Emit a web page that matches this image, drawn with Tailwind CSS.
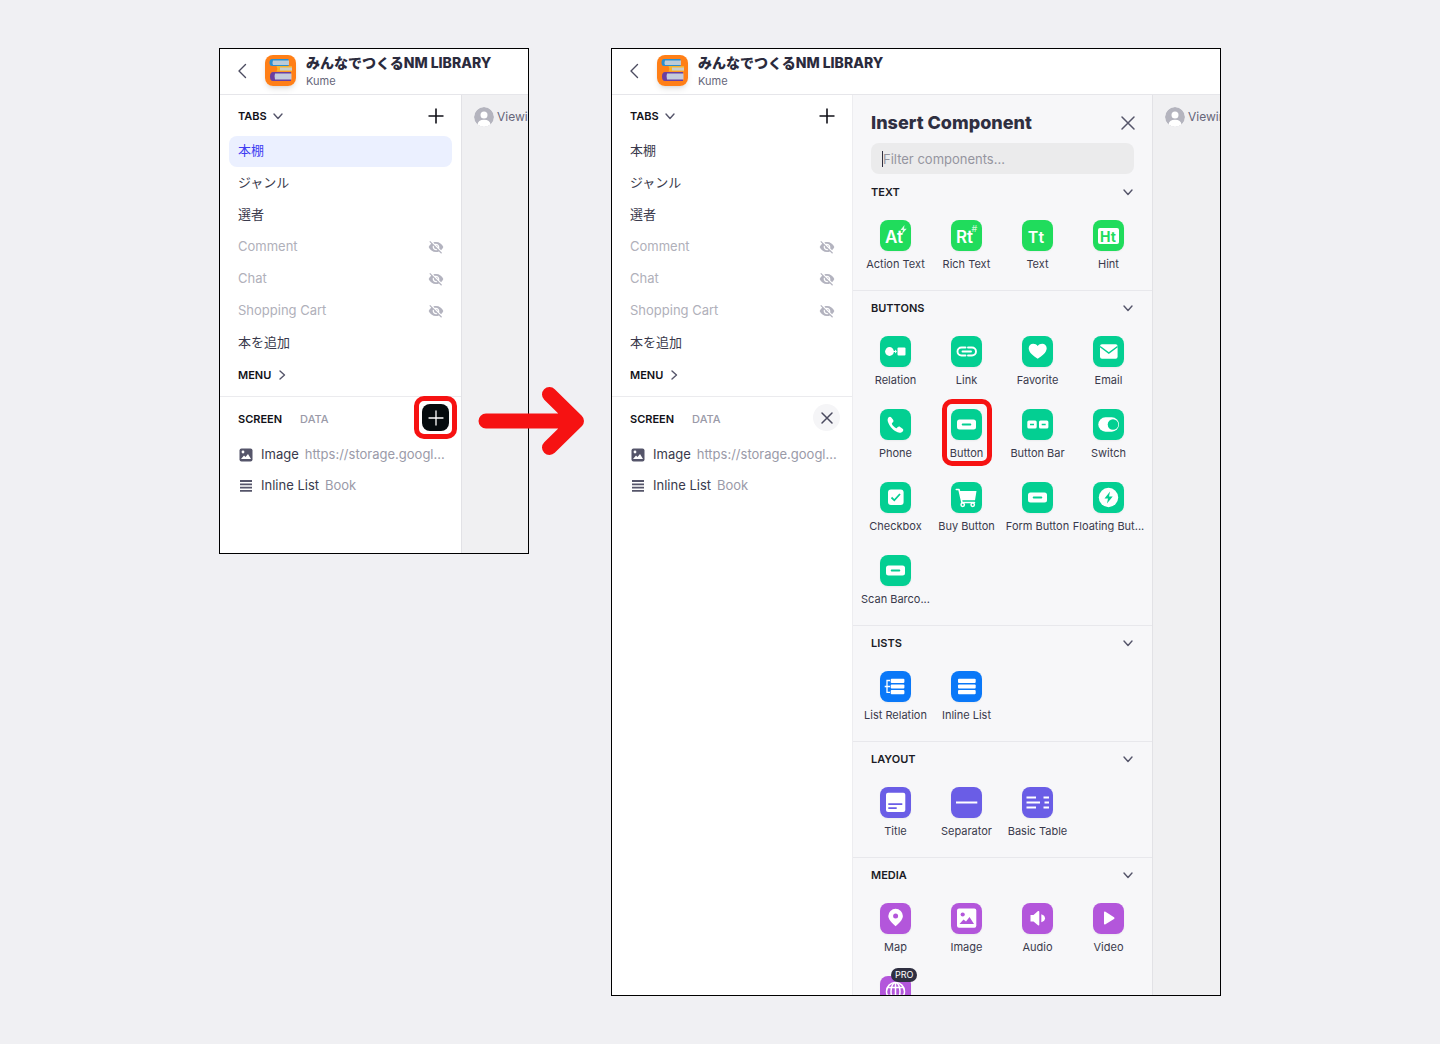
<!DOCTYPE html>
<html lang="ja">
<head>
    <meta charset="UTF-8">
    <meta name="viewport" content="width=device-width, initial-scale=1.0">
    <title>みんなでつくるNM LIBRARY</title>
    <script src="https://cdn.jsdelivr.net/npm/@tailwindcss/browser@4"></script>
</head>
<body class="bg-[#f0f0f3] font-['Inter','Noto_Sans_CJK_JP',sans-serif] text-[#3a3a4c]">
    <main class="flex h-screen items-start justify-center py-12">

        <!-- Step 1: open the add menu -->
        <section aria-label="Step 1" class="flex h-[506px] w-[310px] shrink-0 flex-col overflow-hidden border border-black bg-white">
            <div data-header></div>
            <div class="flex min-h-0 flex-1">
                <div data-sidebar="closed" class="w-[241px] shrink-0"></div>
                <div data-canvas class="flex-1 overflow-hidden border-l border-[#e2e2e6] bg-[#f0f0f2]"></div>
            </div>
        </section>

        <!-- Arrow between the steps -->
        <div class="relative h-full w-[82px] shrink-0">
            <svg class="absolute top-[339px] -left-[51px] h-[68px] w-[106px]" viewBox="0 0 106 68" fill="none" stroke="#f61212" stroke-width="15" stroke-linecap="round" stroke-linejoin="round" aria-hidden="true">
                <path d="M8 34H98M71.500 7.500L98.500 34L71.500 60.500"/>
            </svg>
        </div>

        <!-- Step 2: pick the Button component -->
        <section aria-label="Step 2" class="flex h-full w-[610px] shrink-0 flex-col overflow-hidden border border-black bg-white">
            <div data-header></div>
            <div class="flex min-h-0 flex-1">
                <div data-sidebar="open" class="w-[240px] shrink-0"></div>
                <div class="w-[300px] shrink-0 overflow-hidden border-l border-[#ededf0] bg-[#f7f7f9]">
                    <div class="flex items-center justify-between pt-3 pr-4 pl-[18px]">
                        <h2 class="text-[18px] leading-8 font-extrabold text-[#2f2f41]">Insert Component</h2>
                        <button type="button" aria-label="Close">
                            <svg class="size-4" viewBox="0 0 16 16" fill="none" stroke="#55556a" stroke-width="1.500" stroke-linecap="round"><path d="M2 2L14 14M14 2L2 14"/></svg>
                        </button>
                    </div>
                    <div class="mt-1 mr-[18px] ml-[18px]">
                        <label for="filter" class="sr-only">Filter components</label>
                        <div class="relative">
                            <input id="filter" type="text" placeholder="Filter components..." class="block h-[31px] w-full rounded-lg bg-[#ebebec] px-3 text-[13px] outline-none placeholder:text-[#95959f]">
                            <span class="absolute top-2 left-[11px] h-4 w-px bg-[#2f2f41]"></span>
                        </div>
                    </div>
                    <div id="groups"></div>
                </div>
                <div data-canvas class="flex-1 overflow-hidden border-l border-[#e2e2e6] bg-[#f0f0f2]"></div>
            </div>
        </section>
    </main>

    <script>
        const header = `
            <header class="flex h-[46px] items-center border-b border-[#e6e6ea] bg-white pb-0.5 pl-4">
                <button type="button" aria-label="Back">
                    <svg class="h-4 w-3" viewBox="0 0 12 16" fill="none" stroke="#4b4b60" stroke-width="1.400" stroke-linecap="round" stroke-linejoin="round"><path d="M9.500 1.500L3 8L9.500 14.500"/></svg>
                </button>
                <svg class="ml-[17px] size-[31px] rounded-lg shadow-md" viewBox="0 0 31 31" aria-hidden="true">
                    <rect width="31" height="31" fill="#ff7f17"/>
                    <path d="M7 4H23.500V11H7Q4.500 11 4.500 7.500T7 4Z" fill="#2b8fd0"/>
                    <path d="M8 5.500H24V10H8Q7 7.700 8 5.500Z" fill="#bccbd8"/>
                    <path d="M11.500 11H27V16.500H11.500Q13 13.500 11.500 11Z" fill="#f9b32c"/>
                    <path d="M15 12.500H27V15.500H15Z" fill="#c9cdca"/>
                    <path d="M8 17H26V26H8Q5 26 5 21.500T8 17Z" fill="#6b3fa0"/>
                    <path d="M10 18.500H26.500V24.500H10Q9 21 10 18.500Z" fill="#c3cbdc"/>
                </svg>
                <div class="ml-[10px]">
                    <h1 class="text-[14px] leading-5 font-extrabold whitespace-nowrap text-[#2b2b3d]">みんなでつくるNM LIBRARY</h1>
                    <p class="text-[11px] leading-4 text-[#66667a]">Kume</p>
                </div>
            </header>`;

        const canvas = `
            <div class="flex items-center gap-[3px] pt-3 pl-3 text-[12px] leading-5 whitespace-nowrap text-[#66667a]">
                <svg class="size-5 shrink-0 rounded-full" viewBox="0 0 20 20" aria-hidden="true">
                    <circle cx="10" cy="10" r="10" fill="#b4b4be"/>
                    <circle cx="10" cy="8" r="3.500" fill="#fff"/>
                    <path d="M3.500 17.500Q4 12.700 10 12.700T16.500 17.500Q13.500 20 10 20T3.500 17.500Z" fill="#fff"/>
                </svg>
                Viewing as
            </div>`;

        const hiddenIcon = `<svg class="size-4" viewBox="0 0 24 24" fill="#b3b3bf" aria-hidden="true"><path d="M12 7c2.760 0 5 2.240 5 5 0 .650-.130 1.260-.360 1.830l2.920 2.920c1.510-1.260 2.700-2.890 3.430-4.750-1.730-4.390-6-7.500-11-7.500-1.400 0-2.740.250-3.980.700l2.160 2.160C10.740 7.130 11.350 7 12 7zM2 4.270l2.280 2.280.460.460C3.080 8.300 1.780 10.020 1 12c1.730 4.390 6 7.500 11 7.500 1.550 0 3.030-.300 4.380-.840l.420.420L19.730 22 21 20.730 3.270 3 2 4.270zM7.530 9.800l1.550 1.550c-.050.210-.080.430-.080.650 0 1.660 1.340 3 3 3 .220 0 .440-.030.650-.080l1.550 1.550c-.670.330-1.410.530-2.200.530-2.760 0-5-2.240-5-5 0-.790.200-1.530.530-2.200zm4.310-.780l3.150 3.150.020-.160c0-1.660-1.340-3-3-3l-.170.010z"/></svg>`;

        const tabs = [
            { name: "本棚" },
            { name: "ジャンル" },
            { name: "選者" },
            { name: "Comment", hidden: true },
            { name: "Chat", hidden: true },
            { name: "Shopping Cart", hidden: true },
            { name: "本を追加" }
        ];

        function tabItem(tab, active) {
            let color = "text-[#3a3a4c]";
            if (tab.hidden) color = "text-[#b0b0ba]";
            if (active) color = "bg-[#ebf0ff] text-[#3f3ff2]";
            return `
                <li>
                    <button type="button" class="flex h-[31px] w-full items-center justify-between rounded-lg pr-2 pb-px pl-[9px] text-[13px] ${color}">
                        ${tab.name}${tab.hidden ? hiddenIcon : ""}
                    </button>
                </li>`;
        }

        function sidebar(open) {
            const toggle = open
                ? `<button type="button" aria-label="Close" class="grid size-[27px] place-items-center rounded-full bg-[#f5f5f7]">
                        <svg class="size-[14px]" viewBox="0 0 14 14" fill="none" stroke="#4b4b60" stroke-width="1.500" stroke-linecap="round"><path d="M2 2L12 12M12 2L2 12"/></svg>
                   </button>`
                : `<button type="button" aria-label="Add component" class="relative grid size-[27px] place-items-center rounded-lg bg-[#050b0e]">
                        <svg class="size-4" viewBox="0 0 16 16" fill="none" stroke="#fff" stroke-width="1.300" stroke-linecap="round"><path d="M8 1V15M1 8H15"/></svg>
                        <span class="absolute -inset-2 rounded-[10px] border-[5px] border-[#f61212]"></span>
                   </button>`;
            return `
                <div class="flex items-center justify-between pt-[9px] pr-[17px] pl-[18px]">
                    <button type="button" class="flex items-center gap-1.5 text-[11px] leading-6 font-semibold text-[#111118]">TABS
                        <svg class="size-[10px]" viewBox="0 0 10 10" fill="none" stroke="#55556a" stroke-width="1.400" stroke-linecap="round" stroke-linejoin="round"><path d="M1 3L5 7.500L9 3"/></svg>
                    </button>
                    <button type="button" aria-label="Add tab">
                        <svg class="size-4" viewBox="0 0 16 16" fill="none" stroke="#111118" stroke-width="1.600"><path d="M8 .500V15.500M.500 8H15.500"/></svg>
                    </button>
                </div>
                <ul class="mx-[9px] mt-2 grid gap-px">${tabs.map((t, i) => tabItem(t, !open && i === 0)).join("")}</ul>
                <button type="button" class="mt-1 ml-[18px] flex items-center gap-1.5 text-[11px] leading-6 font-semibold text-[#111118]">MENU
                    <svg class="size-[10px]" viewBox="0 0 10 10" fill="none" stroke="#55556a" stroke-width="1.400" stroke-linecap="round" stroke-linejoin="round"><path d="M3 1L7.500 5L3 9"/></svg>
                </button>
                <div class="mt-[9px] flex items-start justify-between border-t border-[#ebebee] pt-[7px] pr-3 pl-[18px]">
                    <div class="flex gap-[18px] pt-[3px] text-[11px] leading-6">
                        <button type="button" class="font-semibold text-[#111118]">SCREEN</button>
                        <button type="button" class="font-medium text-[#9a9aa8]">DATA</button>
                    </div>
                    ${toggle}
                </div>
                <ul class="mt-2 text-[13px] leading-[31px]">
                    <li class="flex items-center pl-[19px]">
                        <svg class="size-[14px] shrink-0" viewBox="0 0 14 14" aria-hidden="true"><rect x=".500" y=".500" width="13" height="13" rx="2" fill="#55556a"/><circle cx="4" cy="4" r="1.400" fill="#fff"/><path d="M2 11L5 7.500L6.500 9L9 6L12 11Z" fill="#fff"/></svg>
                        <span class="ml-2">Image</span>
                        <span class="ml-1.5 whitespace-nowrap text-[#9a9aa8]">https://storage.googl...</span>
                    </li>
                    <li class="flex items-center pl-[19px]">
                        <svg class="size-[14px] shrink-0" viewBox="0 0 14 14" fill="none" stroke="#55556a" stroke-width="1.800" aria-hidden="true"><path d="M1 2H13M1 5.300H13M1 8.600H13M1 11.900H13"/></svg>
                        <span class="ml-2">Inline List</span>
                        <span class="ml-1.5 whitespace-nowrap text-[#9a9aa8]">Book</span>
                    </li>
                </ul>`;
        }

        // White pill with a slot in the tile colour, shared by the button-like components
        const pill = `<rect x="6" y="10.500" width="19" height="10" rx="2.500"/><rect x="10.700" y="14.500" width="9.600" height="2" rx="1" fill="#03cf92"/>`;

        const groups = [
            {
                title: "TEXT",
                tile: "bg-[#20dc5c]",
                items: [
                    { name: "Action Text", icon: `<text x="5" y="23" font-size="17" font-weight="600">At</text><path d="M24.500 5L20.500 10H23L22 14L26.700 8.700H24Z" opacity=".85"/>` },
                    { name: "Rich Text", icon: `<text x="5" y="22.500" font-size="17" font-weight="600">Rt</text><text x="20.500" y="12" font-size="9" opacity=".8">#</text>` },
                    { name: "Text", icon: `<text x="5.700" y="23" font-size="16" font-weight="600">T</text><text x="16.500" y="23" font-size="16" font-weight="600">t</text>` },
                    { name: "Hint", icon: `<rect x="5" y="8" width="21" height="16" rx="2"/><text x="15" y="21.500" font-size="14" font-weight="700" text-anchor="middle" fill="#20dc5c">Ht</text>` }
                ]
            },
            {
                title: "BUTTONS",
                tile: "bg-[#03cf92]",
                items: [
                    { name: "Relation", icon: `<circle cx="9.500" cy="15.500" r="4.400"/><rect x="17.500" y="11.500" width="8" height="8" rx="1"/><path d="M13 15H15V13.500L17 15.500L15 17.500V16H13Z"/>` },
                    { name: "Link", icon: `<path d="M14.500 11.500H10.500A4 4 0 0 0 10.500 19.500H14.500M17 11.500H21A4 4 0 0 1 21 19.500H17M11.500 15.500H20" fill="none" stroke="#fff" stroke-width="1.900" stroke-linecap="round"/>` },
                    { name: "Favorite", icon: `<path d="M15.700 22.700C12 20.500 6.700 16.500 6.700 12.200C6.700 9.500 8.700 7.700 11.200 7.700C13 7.700 14.700 8.500 15.700 10C16.700 8.500 18.400 7.700 20.200 7.700C22.700 7.700 24.700 9.500 24.700 12.200C24.700 16.500 19.400 20.500 15.700 22.700Z"/>` },
                    { name: "Email", icon: `<rect x="7" y="8.300" width="17.600" height="14.400" rx="2"/><path d="M7 10.500L15.800 17L24.600 10.500" fill="none" stroke="#03cf92" stroke-width="1.500"/>` },
                    { name: "Phone", icon: `<path d="M8.600 8.300c.900-.800 2-.800 2.700.100l1.800 2.400c.600.800.500 1.800-.200 2.500l-.800.800c-.300.300-.300.700-.100 1.100 1 1.600 2.200 2.800 3.800 3.800.400.200.800.200 1.100-.100l.800-.800c.700-.700 1.700-.800 2.500-.200l2.400 1.800c.900.700.900 1.800.100 2.700-1.300 1.400-3.200 1.600-5.100.900-3.900-1.400-7.600-5.100-9.400-9.700-.900-1.900-.800-3.900.400-5.300z"/>` },
                    { name: "Button", icon: pill, marked: true },
                    { name: "Button Bar", icon: `<rect x="5.300" y="11.500" width="9.400" height="8" rx="1.500"/><rect x="17" y="11.500" width="9.400" height="8" rx="1.500"/><path d="M8 15.500H12M19.700 15.500H23.700" stroke="#03cf92" stroke-width="1.700"/>` },
                    { name: "Switch", icon: `<rect x="5.300" y="8.300" width="20.700" height="14.400" rx="7.200"/><circle cx="20" cy="15.500" r="5.300" fill="#03cf92"/>` },
                    { name: "Checkbox", icon: `<rect x="8" y="7.500" width="15.600" height="15.600" rx="3"/><path d="M11.500 15.500L14.300 18.300L20 12" fill="none" stroke="#03cf92" stroke-width="1.800"/>` },
                    { name: "Buy Button", icon: `<path d="M8.500 9H25.500L24 18.300H10.500Z"/><path d="M5.300 7.500H8L11 20.500H23.500" fill="none" stroke="#fff" stroke-width="1.600" stroke-linecap="round" stroke-linejoin="round"/><circle cx="11.700" cy="22.800" r="1.700" fill="#03cf92" stroke="#fff" stroke-width="1.500"/><circle cx="21.700" cy="22.800" r="1.700" fill="#03cf92" stroke="#fff" stroke-width="1.500"/>` },
                    { name: "Form Button", icon: pill },
                    { name: "Floating But...", icon: `<circle cx="15.500" cy="15.500" r="9.700"/><path d="M17 9.500L11.500 16.500H15L14 21.500L19.700 14.500H16Z" fill="#03cf92"/>` },
                    { name: "Scan Barco...", icon: pill }
                ]
            },
            {
                title: "LISTS",
                tile: "bg-[#0a78f8]",
                items: [
                    { name: "List Relation", icon: `<rect x="10.700" y="7.700" width="13.700" height="4.200" rx="1"/><rect x="10.700" y="13.400" width="13.700" height="4.200" rx="1"/><rect x="10.700" y="19.100" width="13.700" height="4.200" rx="1"/><path d="M10 9.500H7V21.300H10M4.700 15.500H10" fill="none" stroke="#fff" stroke-width="1.300"/>` },
                    { name: "Inline List", icon: `<rect x="7" y="7.700" width="17.700" height="4.200" rx="1"/><rect x="7" y="13.400" width="17.700" height="4.200" rx="1"/><rect x="7" y="19.100" width="17.700" height="4.200" rx="1"/>` }
                ]
            },
            {
                title: "LAYOUT",
                tile: "bg-[#6a5de6]",
                items: [
                    { name: "Title", icon: `<rect x="6" y="5.700" width="19.300" height="19.300" rx="2"/><path d="M8.300 17.200H22.300M8.300 21.200H16.700" stroke="#6a5de6" stroke-width="1.800"/>` },
                    { name: "Separator", icon: `<path d="M5 15.500H26.300" stroke="#fff" stroke-width="2"/>` },
                    { name: "Basic Table", icon: `<path d="M4.500 10.500H14M4.500 15.500H18M4.500 20.500H14M21.500 10.500H27M22.500 15.500H27M21.500 20.500H27" stroke="#fff" stroke-width="2"/>` }
                ]
            },
            {
                title: "MEDIA",
                tile: "bg-[#b356db]",
                items: [
                    { name: "Map", icon: `<path d="M15.600 23.300C12 20 8.300 16.500 8.300 13A7.300 7.200 0 0 1 22.900 13C22.900 16.500 19.200 20 15.600 23.300Z"/><circle cx="15.600" cy="13" r="2.500" fill="#b356db"/>` },
                    { name: "Image", icon: `<rect x="6" y="5.500" width="19.300" height="19.300" rx="2"/><circle cx="11.700" cy="11.500" r="2.100" fill="#b356db"/><path d="M8.500 21L12.500 16.500L15 18.500L18.500 14L23 21Z" fill="#b356db"/>` },
                    { name: "Audio", icon: `<path d="M8.500 12H11.500L16 8Q17.300 7.500 17.300 9V21.500Q17.300 23 16 22.300L11.500 18.500H8.500Z"/><path d="M19.300 11.300Q23 12.500 23 15.300T19.300 19.300Z"/>` },
                    { name: "Video", icon: `<path d="M11 9.700Q11 8 12.500 8.800L21 14.300Q22.200 15.100 21 15.900L12.500 21.300Q11 22 11 20.500Z"/>` },
                    { name: "Web View", icon: `<g fill="none" stroke="#fff" stroke-width="1.500"><circle cx="15.500" cy="15.500" r="9"/><ellipse cx="15.500" cy="15.500" rx="4.500" ry="9"/><path d="M15.500 6.500V24.500M7.500 11.500H23.500M7.500 19.500H23.500"/></g>`, pro: true }
                ]
            }
        ];

        function componentItem(item, tile) {
            return `
                <button type="button" class="relative flex min-w-0 flex-col items-center">
                    <svg class="size-[31px] rounded-lg shadow-xs ${tile}" viewBox="0 0 31 31" fill="#fff" aria-hidden="true">${item.icon}</svg>
                    <span class="mt-[5px] text-center text-[11px] leading-4 whitespace-nowrap">${item.name}</span>
                    ${item.marked ? `<span class="absolute -top-[10px] right-[10px] -bottom-[5px] left-[11px] rounded-[10px] border-[5px] border-[#f61212]"></span>` : ""}
                    ${item.pro ? `<span class="absolute -top-2 left-[31px] rounded-full bg-[#2f2f41] px-1 text-[9px] leading-[14px] text-white">PRO</span>` : ""}
                </button>`;
        }

        function componentGroup(group) {
            return `
                <section class="border-t border-[#e8e8ec] pb-[18px] first:border-transparent">
                    <h3>
                        <button type="button" class="flex h-[34px] w-full items-center justify-between pr-[19px] pl-[18px] text-[11px] font-semibold text-[#1b1b25]">${group.title}
                            <svg class="size-[10px]" viewBox="0 0 10 10" fill="none" stroke="#55556a" stroke-width="1.400" stroke-linecap="round" stroke-linejoin="round"><path d="M1 3L5 7.500L9 3"/></svg>
                        </button>
                    </h3>
                    <div class="mr-2 ml-[7px] grid grid-cols-4 gap-y-[21px] pt-[11px]">${group.items.map(i => componentItem(i, group.tile)).join("")}</div>
                </section>`;
        }

        document.querySelectorAll("[data-header]").forEach(el => el.innerHTML = header);
        document.querySelectorAll("[data-canvas]").forEach(el => el.innerHTML = canvas);
        document.querySelectorAll("[data-sidebar]").forEach(el => el.innerHTML = sidebar(el.dataset.sidebar === "open"));
        document.getElementById("groups").innerHTML = groups.map(componentGroup).join("");
    </script>
</body>
</html>
